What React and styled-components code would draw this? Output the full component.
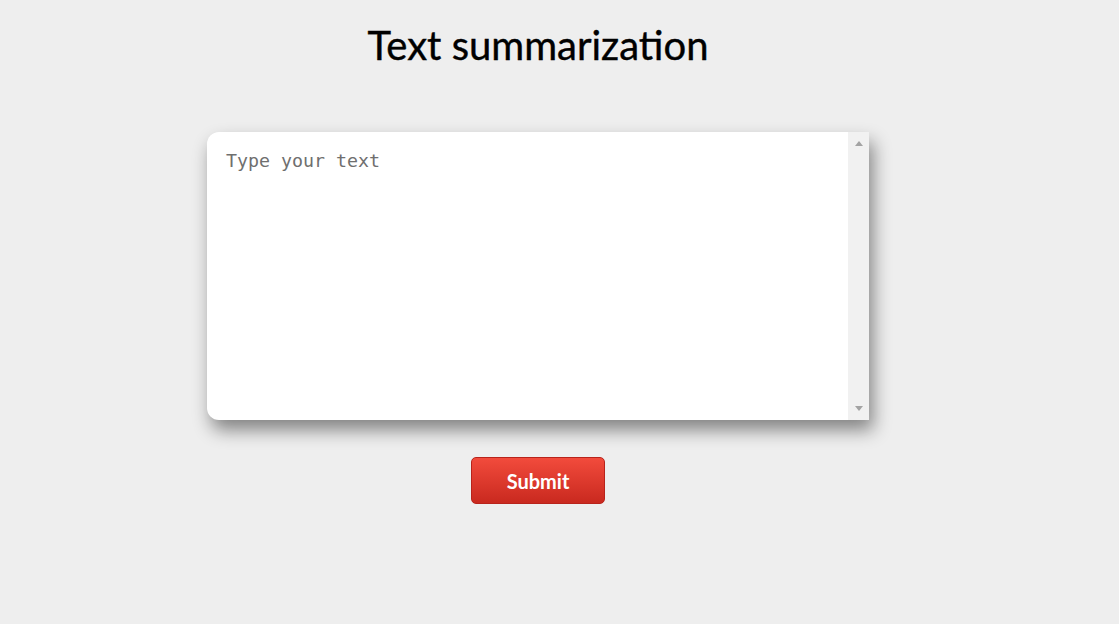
import styled, { createGlobalStyle } from "styled-components";

const GlobalStyle = createGlobalStyle`
    html, body {
        margin: 0;
        padding: 0;
        background: #eeeeee;
        font-family: Lato, "Liberation Sans", sans-serif;
    }
`;

const Page = styled.main`
    width: 1076px;
    min-height: 624px;
    display: flex;
    flex-direction: column;
    align-items: center;
`;

const Title = styled.h1`
    margin: 20px 0 0;
    font-size: 40px;
    font-weight: 400;
    color: #000;
    line-height: 50px;
    -webkit-text-stroke: 0.4px #000;
`;

const Frame = styled.div`
    margin-top: 62px;
    width: 662px;
    height: 288px;
    display: flex;
    background: #fff;
    border-radius: 12px 0 0 12px;
    box-shadow: 4px 10px 18px rgba(0, 0, 0, 0.45);
    overflow: hidden;
`;

const TextBox = styled.textarea`
    flex: 1;
    box-sizing: border-box;
    padding: 18px 18px 18px 19px;
    border: none;
    outline: none;
    resize: none;
    background: transparent;
    font-family: "DejaVu Sans Mono", monospace;
    font-size: 18.3px;
    color: #333;
    &::placeholder {
        color: #6f6f6f;
    }
`;

const ScrollTrack = styled.div`
    width: 21px;
    background: #f1f1f1;
    display: flex;
    flex-direction: column;
    justify-content: space-between;
    align-items: center;
    padding: 9px 0;
    box-sizing: border-box;
`;

const Arrow = styled.span`
    width: 0;
    height: 0;
    border-left: 4.5px solid transparent;
    border-right: 4.5px solid transparent;
    ${({ $down }) =>
        $down
            ? "border-top: 5px solid #a3a3a3;"
            : "border-bottom: 5px solid #a3a3a3;"}
`;

const SubmitButton = styled.button`
    margin-top: 37px;
    width: 134px;
    height: 47px;
    border: 1px solid #b8231b;
    border-radius: 5px;
    background: linear-gradient(to bottom, #f24b3c, #c9291f);
    color: #fff;
    font-family: Lato, "Liberation Sans", sans-serif;
    font-weight: 700;
    font-size: 20px;
    cursor: pointer;
`;

const App = () => {
    return (
        <>
            <GlobalStyle />
            <Page>
                <Title>Text summarization</Title>
                <Frame>
                    <TextBox placeholder="Type your text" />
                    <ScrollTrack>
                        <Arrow />
                        <Arrow $down />
                    </ScrollTrack>
                </Frame>
                <SubmitButton>Submit</SubmitButton>
            </Page>
        </>
    );
};

export default App;
